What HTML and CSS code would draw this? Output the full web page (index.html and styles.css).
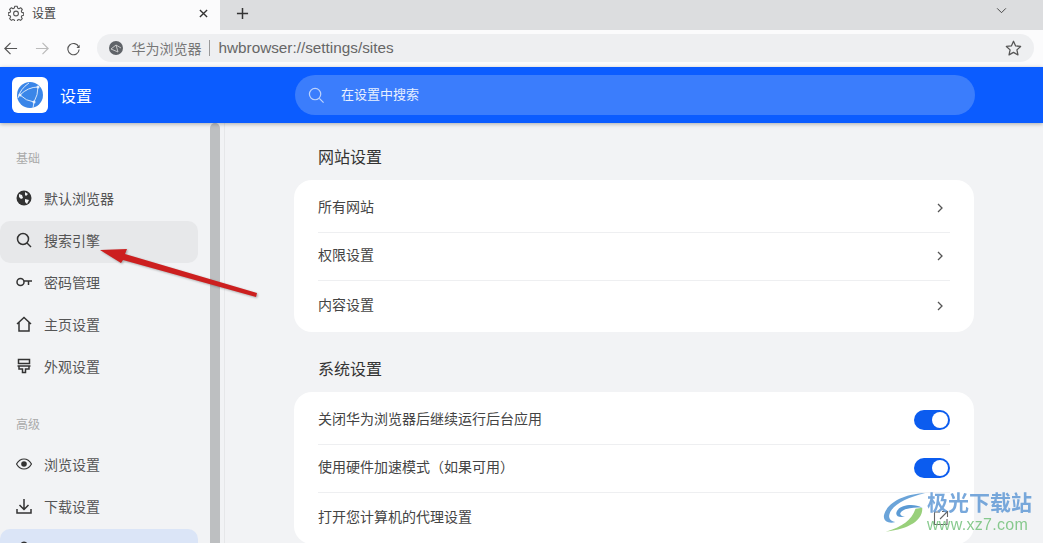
FILE: index.html
```html
<!DOCTYPE html>
<html>

<head>
	<meta charset="UTF-8">
	<title>设置</title>
	<link rel="stylesheet" href="styles.css">
</head>

<body>
	<div id="tabbar">
		<div class="tab">
			<svg class="tabicon" viewBox="0 0 16 16"><path d="M6.800 1.200h2.400l.4 1.900 1.300.6 1.700-1 1.700 1.800-1 1.600.5 1.300 1.900.5v2.300l-1.900.5-.5 1.300 1 1.700-1.700 1.700-1.700-1-1.300.5-.4 1.900H6.800l-.5-1.900-1.300-.5-1.600 1-1.800-1.700 1-1.700-.5-1.300-1.900-.5V7.900l1.900-.5.5-1.300-1-1.600 1.800-1.800 1.600 1 1.300-.6z" fill="none" stroke="#555" stroke-width="1.100" stroke-linejoin="round"/><circle cx="8" cy="8.500" r="2.400" fill="none" stroke="#555" stroke-width="1.100"/></svg>
			<span class="tabtitle">设置</span>
			<svg class="tabclose" viewBox="0 0 10 10"><path d="M1 1l8 8M9 1l-8 8" stroke="#333" stroke-width="1.500"/></svg>
		</div>
		<svg class="newtab" viewBox="0 0 14 14"><path d="M7 1v12M1 7h12" stroke="#333" stroke-width="1.600"/></svg>
		<svg class="tabmenu" viewBox="0 0 12 8"><path d="M1 1.500l5 5 5-5" fill="none" stroke="#333" stroke-width="1"/></svg>
	</div>

	<div id="toolbar">
		<svg class="navbtn" viewBox="0 0 16 16"><path d="M15 8H2M8 2L2 8l6 6" fill="none" stroke="#555" stroke-width="1.300"/></svg>
		<svg class="navbtn" viewBox="0 0 16 16"><path d="M1 8h13M8 2l6 6-6 6" fill="none" stroke="#bbb" stroke-width="1.300"/></svg>
		<svg class="navbtn" viewBox="0 0 16 16"><path d="M13.600 6.500A6 6 0 1 0 14 9" fill="none" stroke="#555" stroke-width="1.200"/><path d="M14.500 4v3.400h-3.400z" fill="#555"/></svg>
		<div class="address">
			<svg class="siteicon" viewBox="0 0 14 14"><circle cx="7" cy="7" r="7" fill="#5f6368"/><path d="M2 8l5-4 2 7zM7 4l5 3" fill="none" stroke="#ddd" stroke-width=".8"/></svg>
			<span class="sitename">华为浏览器</span>
			<span class="sep"></span>
			<span class="url">hwbrowser://settings/sites</span>
			<svg class="star" viewBox="0 0 16 16"><path d="M8 1.200l2 4.400 4.700.5-3.500 3.200 1 4.700L8 11.600l-4.200 2.400 1-4.700L1.300 6.100 6 5.600z" fill="none" stroke="#555" stroke-width="1.200" stroke-linejoin="round"/></svg>
		</div>
	</div>

	<div id="header">
		<div class="brand">
			<div class="logo">
				<svg viewBox="0 0 28 28"><circle cx="14" cy="14" r="13" fill="#3a86e8"/><path d="M4 14Q12 6 22 6M4 14Q10 20 18 21M22 6Q22 14 18 21M2 17Q4 8 13 2M18 21L17 27" fill="none" stroke="#d5e6fb" stroke-width="1"/><circle cx="4" cy="14" r="1.500" fill="#e6f0fd"/><circle cx="22" cy="6" r="1.500" fill="#e6f0fd"/><circle cx="18" cy="21" r="1.500" fill="#e6f0fd"/></svg>
			</div>
			<span class="brandname">设置</span>
		</div>
		<div class="search">
			<svg viewBox="0 0 18 18"><circle cx="7.500" cy="7.500" r="6" fill="none" stroke="#bcd2fb" stroke-width="1.300"/><path d="M12 12l4.500 4.500" stroke="#bcd2fb" stroke-width="1.300"/></svg>
			<span>在设置中搜索</span>
		</div>
	</div>

	<div id="page">
		<div id="side">
			<div class="sidelist">
				<p class="grouptitle">基础</p>
				<a class="item"><svg viewBox="0 0 16 16"><circle cx="8" cy="8" r="7.500" fill="#333"/><path d="M3 4l3 1 1 3-2 1-2-2zM9 2l3 2-2 2-1-1zM9 9l4 1-2 4-2-2z" fill="#f2f3f5"/></svg>默认浏览器</a>
				<a class="item hover"><svg viewBox="0 0 16 16"><circle cx="7" cy="7" r="5.500" fill="none" stroke="#333" stroke-width="1.500"/><path d="M11 11l4 4" stroke="#333" stroke-width="1.500"/></svg>搜索引擎</a>
				<a class="item"><svg viewBox="0 0 16 16"><circle cx="4.500" cy="8" r="3.500" fill="none" stroke="#333" stroke-width="1.500"/><path d="M8 7h8M12.500 7v4" fill="none" stroke="#333" stroke-width="1.500"/></svg>密码管理</a>
				<a class="item"><svg viewBox="0 0 16 16"><path d="M1 8l7-6.500L15 8M3 6.500V15h10V6.500" fill="none" stroke="#333" stroke-width="1.500"/></svg>主页设置</a>
				<a class="item"><svg viewBox="0 0 16 16"><path d="M2.500 1.500h11v4h-11zM1.500 8h13M3 8v3h3.500v3.500h3V11H13V8" fill="none" stroke="#333" stroke-width="1.500"/></svg>外观设置</a>
				<p class="grouptitle second">高级</p>
				<a class="item"><svg viewBox="0 0 16 16"><path d="M.5 8C2.500 4.500 5 3 8 3s5.500 1.500 7.500 5c-2 3.500-4.500 5-7.500 5S2.500 11.500.5 8z" fill="none" stroke="#333" stroke-width="1.200"/><circle cx="8" cy="8" r="2.800" fill="#333"/></svg>浏览设置</a>
				<a class="item"><svg viewBox="0 0 16 16"><path d="M8 1v10M3.500 7L8 11.500 12.500 7M1 11v4h14v-4" fill="none" stroke="#333" stroke-width="1.500"/></svg>下载设置</a>
				<a class="item active"><svg viewBox="0 0 16 16"><circle cx="8" cy="5" r="3.500" fill="#333"/></svg></a>
			</div>
			<div class="scroll"></div>
		</div>

		<div id="main">
			<div class="column">
				<h2>网站设置</h2>
				<div class="card">
					<div class="row"><span>所有网站</span><svg class="chev" viewBox="0 0 6 10"><path d="M1 1l4 4-4 4" fill="none" stroke="#555" stroke-width="1.300"/></svg></div>
					<div class="row"><span>权限设置</span><svg class="chev" viewBox="0 0 6 10"><path d="M1 1l4 4-4 4" fill="none" stroke="#555" stroke-width="1.300"/></svg></div>
					<div class="row"><span>内容设置</span><svg class="chev" viewBox="0 0 6 10"><path d="M1 1l4 4-4 4" fill="none" stroke="#555" stroke-width="1.300"/></svg></div>
				</div>
				<h2 class="next">系统设置</h2>
				<div class="card">
					<div class="row"><span>关闭华为浏览器后继续运行后台应用</span><i class="switch"></i></div>
					<div class="row"><span>使用硬件加速模式（如果可用）</span><i class="switch"></i></div>
					<div class="row"><span>打开您计算机的代理设置</span><svg class="extlink" viewBox="0 0 16 16"><path d="M7 2H1.500v12.500H14V9M9 1.500h5.500V7M14.500 1.500L7 9" fill="none" stroke="#666" stroke-width="1.100"/></svg></div>
				</div>
			</div>
		</div>
	</div>

	<!-- 红色箭头 -->
	<svg class="arrow" viewBox="0 0 162 54"><path d="M2 4L29 3 27 8 159 47 158 51 25 14 23 17z" fill="#cc1f1f"/></svg>

	<!-- 水印 -->
	<div class="mark">
		<svg viewBox="0 0 46 42"><path d="M44 1C25 1 4 10 1 24c-1 7 6 9 12 7-5-1-8-4-6-9C10 13 26 5 44 1z" fill="#5b9bd5"/><path d="M41 16c-9-5-25-3-27 5-1 4 4 6 9 4-3 0-5-1-5-3 2-5 13-7 23-6z" fill="#4a90d0"/><path d="M41 16c1 12-12 22-38 25 17-5 27-12 31-24z" fill="#8ecb6d"/></svg>
		<div class="marktext">
			<div class="markcn">极光下载站</div>
			<div class="markurl">www.xz7.com</div>
		</div>
	</div>
</body>

</html>
```

FILE: styles.css
```css
html,
body {
	width: 100%;
	height: 100%;
	margin: 0;
	overflow: hidden;
}

body {
	position: relative;
	display: flex;
	flex-direction: column;
	font-family: "Liberation Sans", "Noto Sans CJK SC", sans-serif;
	color: #333;
	background: #f2f3f5;
}

p,
h2 {
	margin: 0;
}

svg {
	flex: none;
	display: block;
}

#tabbar {
	height: 30px;
	flex: none;
	display: flex;
	align-items: center;
	background: #dcdddf;
}

.tab {
	width: 220px;
	height: 30px;
	box-sizing: border-box;
	padding: 0 8px 4px 8px;
	display: flex;
	align-items: center;
	background: #fbfbfc;
}

.tabicon {
	width: 16px;
	height: 16px;
}

.tabtitle {
	margin: 0 0 2px 8px;
	font-size: 12px;
	color: #444;
	flex: 1;
}

.tabclose {
	width: 9px;
	height: 9px;
	margin-right: 4px;
}

.newtab {
	width: 13px;
	height: 13px;
	margin: 0 0 3px 16px;
}

.tabmenu {
	width: 11px;
	height: 7px;
	margin: 0 36px 10px auto;
}

#toolbar {
	height: 37px;
	flex: none;
	box-sizing: border-box;
	padding: 0 9px 1px 3px;
	display: flex;
	align-items: center;
	gap: 16.500px;
	background: #fbfbfc;
}

.navbtn {
	width: 15px;
	height: 15px;
}

.address {
	flex: 1;
	height: 28px;
	margin-left: -1px;
	box-sizing: border-box;
	padding: 0 12px 0 12px;
	display: flex;
	align-items: center;
	border-radius: 14px;
	background: #eeeff1;
}

.siteicon {
	width: 14px;
	height: 14px;
}

.sitename {
	margin: 0 0 1px 9px;
	font-size: 14px;
	color: #777;
}

.sep {
	width: 1px;
	height: 16px;
	margin: 0 9px 0 7px;
	background: #999;
}

.url {
	flex: 1;
	margin-bottom: 1px;
	font-size: 15.300px;
	color: #666;
}

.star {
	width: 17px;
	height: 17px;
}

#header {
	height: 56px;
	flex: none;
	display: flex;
	align-items: center;
	background: #0b5cff;
	box-shadow: 0 1px 4px rgba(0, 0, 0, .3);
	position: relative;
}

.brand {
	width: 295px;
	box-sizing: border-box;
	padding-left: 12px;
	display: flex;
	align-items: center;
}

.logo {
	width: 36px;
	height: 36px;
	box-sizing: border-box;
	padding: 4px;
	border-radius: 6px;
	background: #fff;
}

.brandname {
	margin-left: 12px;
	font-size: 16px;
	color: #fff;
}

.search {
	width: 680px;
	height: 40px;
	box-sizing: border-box;
	padding-left: 13px;
	display: flex;
	align-items: center;
	border-radius: 20px;
	background: #3b7dfc;
	font-size: 13px;
	color: #e8f0ff;
}

.search span {
	margin-bottom: 3px;
}

.search svg {
	width: 17px;
	height: 17px;
	margin-right: 16px;
}

#page {
	flex: 1;
	min-height: 0;
	display: flex;
}

#side {
	width: 225px;
	flex: none;
	display: flex;
	box-sizing: border-box;
	border-right: 1px solid #e6e7e9;
}

.sidelist {
	width: 198px;
	flex: none;
}

.grouptitle {
	height: 16px;
	margin: 28px 0 12px 16px;
	font-size: 12px;
	line-height: 16px;
	color: #aaa;
}

.item {
	height: 42px;
	box-sizing: border-box;
	padding: 0 0 4px 16px;
	display: flex;
	align-items: center;
	font-size: 14px;
	color: #555;
	border-radius: 10px;
}

.item svg {
	width: 16px;
	height: 16px;
	margin-right: 12px;
}

.item.hover {
	background: #e7e8ea;
}

.item.active {
	background: #dbe5f7;
}

.scroll {
	width: 10px;
	margin-left: 12px;
	background: #bdbfc1;
	border-radius: 5px 5px 0 0;
}

#main {
	flex: 1;
	min-width: 0;
	padding-left: 69px;
}

.column {
	width: 680px;
}

h2 {
	height: 57px;
	box-sizing: border-box;
	padding: 24px 0 0 24px;
	font-size: 16px;
	font-weight: normal;
	line-height: 22px;
	color: #333;
}

h2.next {
	height: 60px;
	padding-top: 27px;
}

.card {
	box-sizing: border-box;
	padding: 4px 24px 2px;
	border-radius: 18px;
	background: #fff;
}

.row {
	height: 48.670px;
	box-sizing: border-box;
	display: flex;
	align-items: center;
	justify-content: space-between;
	font-size: 14px;
	color: #444;
	border-bottom: 1px solid #eeeff1;
}

.row span {
	margin-bottom: 4px;
}

.row:last-child {
	border-bottom: 0;
}

.chev {
	width: 6px;
	height: 10px;
	margin-right: 7px;
}

.switch {
	position: relative;
	width: 36px;
	height: 20px;
	border-radius: 10px;
	background: #0b5cef;
}

.switch::after {
	content: "";
	position: absolute;
	top: 2px;
	right: 2px;
	width: 16px;
	height: 16px;
	border-radius: 50%;
	background: #fff;
}

.extlink {
	width: 16px;
	height: 16px;
	margin-right: 1px;
}

.arrow {
	position: absolute;
	left: 98px;
	top: 246px;
	width: 162px;
	height: 54px;
	filter: drop-shadow(1px 1px 1px rgba(0, 0, 0, .3));
}

.mark {
	position: absolute;
	left: 883px;
	top: 492px;
	display: flex;
	align-items: center;
	opacity: .9;
}

.mark svg {
	width: 44px;
	height: 41px;
}

.marktext {
	margin-top: -4px;
}

.markcn {
	font-size: 21px;
	line-height: 28px;
	font-weight: bold;
	color: #6a9fd8;
}

.markurl {
	font-size: 16px;
	line-height: 16px;
	color: #7cc583;
	letter-spacing: .3px;
}
```
